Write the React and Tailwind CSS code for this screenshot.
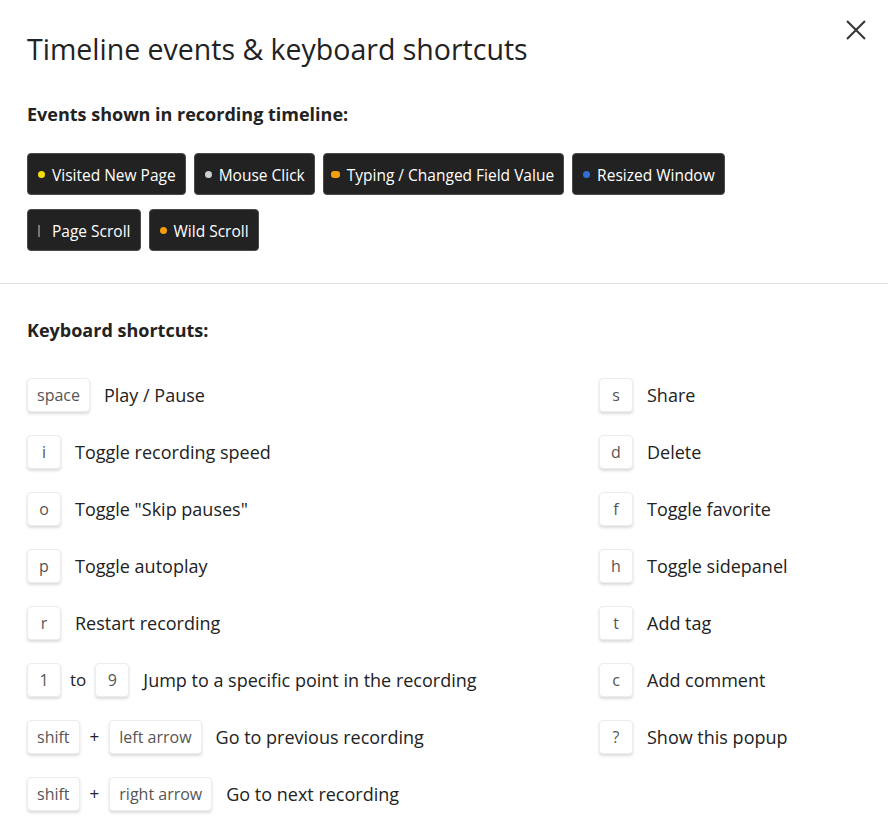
import React from "react";

const chips = [
  { label: "Visited New Page", dot: "w-[7px] h-[7px] rounded-full bg-[#f5dd12]" },
  { label: "Mouse Click", dot: "w-[7px] h-[7px] rounded-full bg-[#cfcfcf]" },
  { label: "Typing / Changed Field Value", dot: "w-[9px] h-[7px] -ml-[3px] rounded-[3px] bg-[#f59e0b]" },
  { label: "Resized Window", dot: "w-[7px] h-[7px] rounded-full bg-[#2f6fd6]" },
  { label: "Page Scroll", dot: "w-[2px] h-[12px] mr-[5px] bg-[#777]" },
  { label: "Wild Scroll", dot: "w-[7px] h-[7px] rounded-full bg-[#f59e0b]" },
];

function Key({ children }) {
  return (
    <span className="inline-flex items-center justify-center h-[34px] min-w-[34px] px-[9px] rounded-[4px] border border-[#ececec] bg-white text-[16px] text-[#555] shadow-[0_2px_3px_rgba(0,0,0,0.14)]">
      {children}
    </span>
  );
}

function Row({ keys, desc }) {
  return (
    <div className="flex items-center h-[34px]">
      <div className="flex items-center gap-[9px] text-[17px] text-[#222]">{keys}</div>
      <span className="ml-[14px] text-[18px] text-[#222]">{desc}</span>
    </div>
  );
}

const left = [
  { keys: [<Key key="a">space</Key>], desc: "Play / Pause" },
  { keys: [<Key key="a">i</Key>], desc: "Toggle recording speed" },
  { keys: [<Key key="a">o</Key>], desc: 'Toggle "Skip pauses"' },
  { keys: [<Key key="a">p</Key>], desc: "Toggle autoplay" },
  { keys: [<Key key="a">r</Key>], desc: "Restart recording" },
  {
    keys: [<Key key="a">1</Key>, <span key="b">to</span>, <Key key="c">9</Key>],
    desc: "Jump to a specific point in the recording",
  },
  {
    keys: [<Key key="a">shift</Key>, <span key="b" className="px-[1px]">+</span>, <Key key="c">left arrow</Key>],
    desc: "Go to previous recording",
  },
  {
    keys: [<Key key="a">shift</Key>, <span key="b" className="px-[1px]">+</span>, <Key key="c">right arrow</Key>],
    desc: "Go to next recording",
  },
];

const right = [
  { k: "s", desc: "Share" },
  { k: "d", desc: "Delete" },
  { k: "f", desc: "Toggle favorite" },
  { k: "h", desc: "Toggle sidepanel" },
  { k: "t", desc: "Add tag" },
  { k: "c", desc: "Add comment" },
  { k: "?", desc: "Show this popup" },
];

export default function App() {
  return (
    <div
      className="relative w-[888px] h-[838px] bg-white overflow-hidden text-[#222]"
      style={{ fontFamily: '"Open Sans", "Noto Sans", sans-serif' }}
    >
      <button className="absolute right-[22px] top-[20px] w-[20px] h-[20px] text-[#333]">
        <svg viewBox="0 0 20 20" width="20" height="20" fill="none" stroke="currentColor" strokeWidth="2">
          <path d="M1 1 L19 19 M19 1 L1 19" />
        </svg>
      </button>

      <div className="px-[27px] pt-[29px]">
        <h1 className="text-[28.5px] leading-[40px] font-normal text-[#222]">
          Timeline events &amp; keyboard shortcuts
        </h1>
        <h2 className="mt-[33px] text-[18px] leading-[24px] font-bold">Events shown in recording timeline:</h2>
        <div className="mt-[27px] flex flex-wrap gap-x-[8px] gap-y-[14px] w-[760px]">
          {chips.map((c) => (
            <div
              key={c.label}
              className="flex items-center h-[42px] pl-[10px] pr-[9px] gap-[7px] rounded-[4px] bg-[#222] border border-[#4a4a4a] text-white text-[15.5px] leading-[42px] pt-[1px]"
            >
              <span className={c.dot} />
              <span>{c.label}</span>
            </div>
          ))}
        </div>
      </div>

      <div className="mt-[32px] h-[1px] bg-[#e3e3e3]" />

      <div className="px-[27px] pt-[34px]">
        <h2 className="text-[18px] leading-[24px] font-bold">Keyboard shortcuts:</h2>
        <div className="mt-[36px] flex">
          <div className="w-[572px] flex flex-col gap-[23px]">
            {left.map((r, i) => (
              <Row key={i} keys={r.keys} desc={r.desc} />
            ))}
          </div>
          <div className="flex flex-col gap-[23px]">
            {right.map((r) => (
              <Row key={r.k} keys={[<Key key="a">{r.k}</Key>]} desc={r.desc} />
            ))}
          </div>
        </div>
      </div>
    </div>
  );
}
